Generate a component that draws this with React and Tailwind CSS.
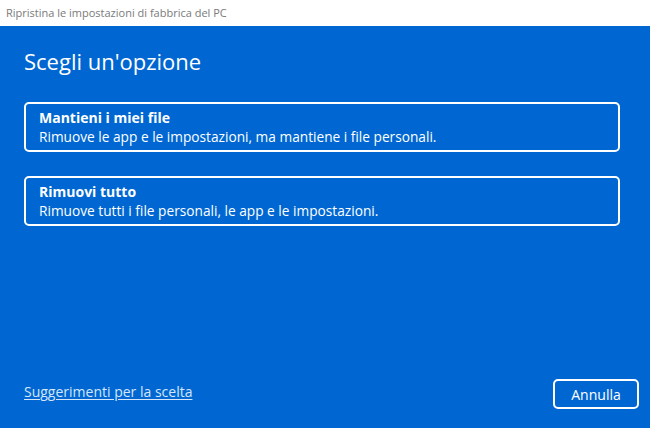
export default function App() {
  const options = [
    {
      title: "Mantieni i miei file",
      desc: "Rimuove le app e le impostazioni, ma mantiene i file personali.",
    },
    {
      title: "Rimuovi tutto",
      desc: "Rimuove tutti i file personali, le app e le impostazioni.",
    },
  ];

  return (
    <div className="w-[650px] h-[428px] flex flex-col font-['Open_Sans',sans-serif] overflow-hidden">
      <div className="h-[26px] bg-white flex items-center px-[6px] text-[11px] text-[#7a7a7a]">
        Ripristina le impostazioni di fabbrica del PC
      </div>
      <div className="flex-1 bg-[#0067d2] text-white flex flex-col px-6 pb-[19px]">
        <h1 className="mt-[20px] text-[22px] leading-[30px]">Scegli un'opzione</h1>
        <div className="mt-[26px] mr-[6px] flex flex-col gap-6">
          {options.map((o) => (
            <button
              key={o.title}
              className="h-[50px] border-2 border-white rounded-[5px] px-[13px] flex flex-col justify-center text-left"
            >
              <span className="text-[14px] leading-[19px] font-bold">{o.title}</span>
              <span className="text-[13.7px] leading-[19px]">{o.desc}</span>
            </button>
          ))}
        </div>
        <div className="mt-auto flex items-end justify-between">
          <a className="mb-[7px] text-[14px] text-[#d4e6f8] underline underline-offset-2">
            Suggerimenti per la scelta
          </a>
          <button className="w-[86px] h-[30px] -mr-[13px] border-2 border-white rounded-[5px] text-[14px]">
            Annulla
          </button>
        </div>
      </div>
    </div>
  );
}
